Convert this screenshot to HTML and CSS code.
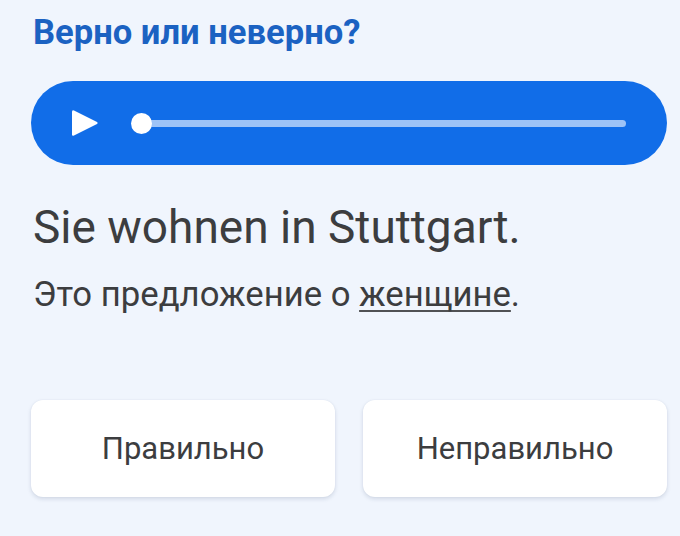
FILE: index.html
```html
<!DOCTYPE html>
<html lang="ru">
<head>
<meta charset="utf-8">
<link rel="stylesheet" href="styles.css">
</head>
<body>
<main class="screen">
  <h1 class="title">Верно или неверно?</h1>
  <div class="player">
    <svg class="play" width="28" height="30" viewBox="0 0 28 30">
      <path d="M3 2.5 Q1 1.5 1 3.8 V26.2 Q1 28.5 3 27.5 L26 16 Q27.5 15 26 14 Z" fill="#ffffff"/>
    </svg>
    <div class="track">
      <div class="knob"></div>
    </div>
  </div>
  <p class="sentence">Sie wohnen in Stuttgart.</p>
  <p class="question">Это предложение о <span class="word">женщине</span>.</p>
  <div class="answers">
    <button class="answer">Правильно</button>
    <button class="answer">Неправильно</button>
  </div>
</main>
</body>
</html>
```
FILE: styles.css
```css
html, body {
  margin: 0;
  padding: 0;
  background: #f0f5fd;
}
body {
  font-family: Roboto, "Noto Sans", sans-serif;
  width: 680px;
  height: 536px;
  overflow: hidden;
}
.screen {
  display: flex;
  flex-direction: column;
  padding: 12px 13px 0 31px;
}
.title {
  margin: 0 0 0 2px;
  font-size: 34.6px;
  line-height: 40px;
  font-weight: 700;
  color: #1b62c2;
}
.player {
  margin-top: 29px;
  height: 84px;
  border-radius: 42px;
  background: #116de8;
  display: flex;
  align-items: center;
  padding: 0 41px 0 40px;
}
.play {
  display: block;
  flex: none;
}
.track {
  position: relative;
  flex: 1;
  height: 7px;
  margin-left: 42px;
  border-radius: 4px;
  background: #9dc3f7;
}
.knob {
  position: absolute;
  left: -10px;
  top: 50%;
  width: 21px;
  height: 21px;
  margin-top: -10.5px;
  border-radius: 50%;
  background: #ffffff;
}
.sentence {
  margin: 35px 0 0 2px;
  font-size: 46px;
  line-height: 54px;
  color: #3c3d3f;
}
.question {
  margin: 20px 0 0 2px;
  font-size: 34.7px;
  line-height: 40px;
  color: #3c3d3f;
}
.word {
  text-decoration: underline;
  text-decoration-thickness: 2px;
  text-underline-offset: 4px;
  text-decoration-color: #505154;
  text-decoration-skip-ink: none;
}
.answers {
  margin-top: 86px;
  display: grid;
  grid-template-columns: 1fr 1fr;
  gap: 28px;
}
.answer {
  height: 97px;
  border: none;
  border-radius: 12px;
  background: #ffffff;
  box-shadow: 0 2px 4px rgba(30, 50, 90, 0.14), 0 0 2px rgba(30, 50, 90, 0.06);
  font-family: Roboto, "Noto Sans", sans-serif;
  font-size: 31px;
  color: #3c3d3f;
  padding: 0;
}
```
